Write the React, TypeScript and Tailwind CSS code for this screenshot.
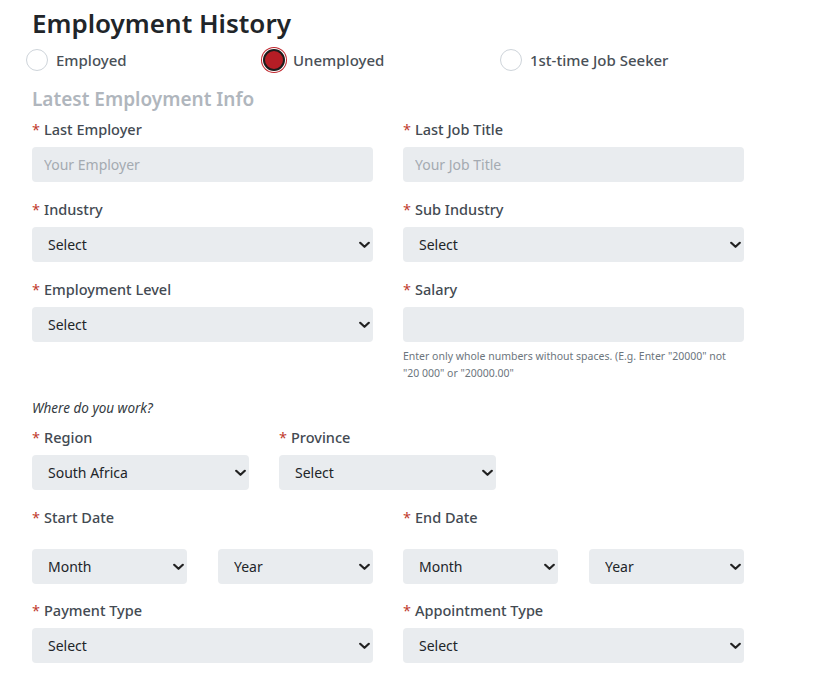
import React from "react";

const font = { fontFamily: '"Noto Sans", "Open Sans", sans-serif' };

function Chevron() {
  return (
    <svg width="11" height="7" viewBox="0 0 11 7" className="pointer-events-none absolute right-[3px] top-1/2 -translate-y-1/2">
      <path d="M1.2 1.2 L5.5 5.3 L9.8 1.2" fill="none" stroke="#222" strokeWidth="2.2" strokeLinecap="round" strokeLinejoin="round" />
    </svg>
  );
}

function Label({ text }: { text: string }) {
  return (
    <div className="mb-[7px] h-5 text-[14.5px] leading-[19px] font-medium text-[#434a52]">
      <span className="text-[#c0392b] font-normal mr-[4px]">*</span>
      {text}
    </div>
  );
}

function Select({ value = "Select" }: { value?: string }) {
  return (
    <div className="relative">
      <select
        defaultValue={value}
        className="h-[35px] w-full appearance-none rounded-[4px] bg-[#e9ecef] pl-4 pr-8 text-[14px] text-[#212529] outline-none"
        style={font}
      >
        <option>{value}</option>
      </select>
      <Chevron />
    </div>
  );
}

function Input({ placeholder = "" }: { placeholder?: string }) {
  return (
    <input
      placeholder={placeholder}
      className="h-[35px] w-full rounded-[4px] bg-[#e9ecef] px-3 text-[14px] text-[#212529] outline-none placeholder:text-[#a4aab1]"
      style={font}
    />
  );
}

function Radio({ label, checked }: { label: string; checked?: boolean }) {
  return (
    <label className="flex w-[237px] items-center gap-2">
      {checked ? (
        <span className="h-[22px] w-[22px] rounded-full bg-[#b51d25] border-[2.5px] border-[#1c1c1c] ring-1 ring-[#c0262e] ring-offset-1" />
      ) : (
        <span className="h-[22px] w-[22px] rounded-full border border-[#ced4da] bg-white" />
      )}
      <span className="text-[15px] font-medium text-[#495057]">{label}</span>
    </label>
  );
}

export default function App() {
  return (
    <div className="min-h-[682px] w-[823px] bg-white pl-8" style={font}>
      <div className="w-[712px]">
        <h1 className="pt-[6px] text-[26px] leading-[34px] font-semibold text-[#212529]">Employment History</h1>
        <div className="mt-[9px] -ml-[6px] flex h-[22px]">
          <Radio label="Employed" />
          <Radio label="Unemployed" checked />
          <Radio label="1st-time Job Seeker" />
        </div>
        <h2 className="mt-[15px] text-[19px] leading-[26px] font-semibold text-[#b0b6bd]">Latest Employment Info</h2>

        <div className="mt-[8px] grid grid-cols-2 gap-x-[30px]">
          <div>
            <Label text="Last Employer" />
            <Input placeholder="Your Employer" />
          </div>
          <div>
            <Label text="Last Job Title" />
            <Input placeholder="Your Job Title" />
          </div>
        </div>

        <div className="mt-[18px] grid grid-cols-2 gap-x-[30px]">
          <div>
            <Label text="Industry" />
            <Select />
          </div>
          <div>
            <Label text="Sub Industry" />
            <Select />
          </div>
        </div>

        <div className="mt-[18px] grid grid-cols-2 gap-x-[30px]">
          <div>
            <Label text="Employment Level" />
            <Select />
          </div>
          <div>
            <Label text="Salary" />
            <Input />
            <p className="mt-[6px] text-[10.5px] leading-[17px] text-[#6c757d]">
              Enter only whole numbers without spaces. (E.g. Enter "20000" not "20 000" or "20000.00"
            </p>
          </div>
        </div>

        <p className="mt-[17px] text-[13.5px] leading-[18px] italic text-[#333a40]">Where do you work?</p>

        <div className="mt-[11px] flex gap-x-[30px]">
          <div className="w-[217px]">
            <Label text="Region" />
            <Select value="South Africa" />
          </div>
          <div className="w-[217px]">
            <Label text="Province" />
            <Select />
          </div>
        </div>

        <div className="mt-[18px] grid grid-cols-2 gap-x-[30px]">
          <div>
            <Label text="Start Date" />
            <div className="mt-[21px] grid grid-cols-2 gap-x-[31px]">
              <Select value="Month" />
              <Select value="Year" />
            </div>
          </div>
          <div>
            <Label text="End Date" />
            <div className="mt-[21px] grid grid-cols-2 gap-x-[31px]">
              <Select value="Month" />
              <Select value="Year" />
            </div>
          </div>
        </div>

        <div className="mt-[17px] grid grid-cols-2 gap-x-[30px]">
          <div>
            <Label text="Payment Type" />
            <Select />
          </div>
          <div>
            <Label text="Appointment Type" />
            <Select />
          </div>
        </div>
      </div>
    </div>
  );
}
